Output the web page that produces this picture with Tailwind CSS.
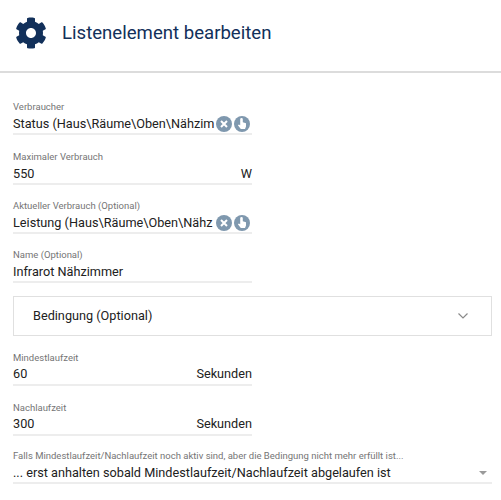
<!DOCTYPE html>
<html><head><meta charset="utf-8"><script src="https://cdn.jsdelivr.net/npm/@tailwindcss/browser@4"></script></head>
<body class="bg-white overflow-hidden">
<div class="w-[501px] h-[500px] font-['Roboto',sans-serif] text-[#212121]">
  <header class="h-[73px] border-b-2 border-[#dcdcdc] flex items-start pl-[15px] pt-[17px]">
    <svg class="w-[32px] h-[32px]" viewBox="0 0 512 512"><path fill="#12305a" d="M487.4 315.7l-42.6-24.6c4.3-23.2 4.3-47 0-70.2l42.6-24.6c4.9-2.8 7.1-8.6 5.5-14-11.1-35.6-30-67.8-54.7-94.6-3.8-4.1-10-5.1-14.8-2.3L380.8 110c-17.9-15.4-38.5-27.3-60.8-35.1V25.8c0-5.6-3.9-10.5-9.4-11.7-36.7-8.2-74.3-7.8-109.2 0-5.5 1.2-9.4 6.1-9.4 11.7V75c-22.2 7.9-42.8 19.8-60.8 35.1L88.7 85.5c-4.9-2.8-11-1.9-14.8 2.3-24.7 26.7-43.6 58.9-54.7 94.6-1.7 5.4.6 11.2 5.5 14L67.3 221c-4.3 23.2-4.3 47 0 70.2l-42.6 24.6c-4.9 2.8-7.1 8.6-5.5 14 11.1 35.6 30 67.8 54.7 94.6 3.8 4.1 10 5.1 14.8 2.3l42.6-24.6c17.9 15.4 38.5 27.3 60.8 35.1v49.2c0 5.6 3.9 10.5 9.4 11.7 36.7 8.2 74.3 7.8 109.2 0 5.5-1.2 9.4-6.1 9.4-11.7v-49.2c22.2-7.9 42.8-19.8 60.8-35.1l42.6 24.6c4.9 2.8 11 1.9 14.8-2.3 24.7-26.7 43.6-58.9 54.7-94.6 1.5-5.5-.7-11.3-5.6-14.1zM256 336c-44.1 0-80-35.9-80-80s35.9-80 80-80 80 35.9 80 80-35.9 80-80 80z"/></svg>
    <h1 class="ml-[15px] mt-[3px] text-[18.6px] leading-[26px] text-[#12305a]">Listenelement bearbeiten</h1>
  </header>
  <main class="px-[13px]">
    <div class="w-[239px] mt-[28px] h-[34px] border-b-2 border-[#ededed]">
      <div class="text-[9.5px] leading-[12px] text-[#757575]">Verbraucher</div>
      <div class="flex items-center h-[17px] mt-[2px]">
        <span class="w-[203px] whitespace-nowrap text-[12.7px] leading-[17px]">Status (Haus\Räume\Oben\Nähzim</span>
        <svg class="w-[16px] h-[16px]" viewBox="0 0 16 16"><circle cx="8" cy="8" r="8" fill="#7f98ae"/><path d="M5 5l6 6M11 5l-6 6" stroke="#fff" stroke-width="2"/></svg>
        <svg class="ml-[2px] w-[16px] h-[16px]" viewBox="0 0 16 16"><circle cx="8" cy="8" r="8" fill="#7f98ae"/><path d="M6.2 3.2a1.3 1.3 0 0 1 2.6 0v3l3.2 1.1v3.2L11 13H6.8L3.9 9.2l1-.8 1.3.9z" fill="#fff"/></svg>
      </div>
    </div>
    <div class="w-[239px] mt-[16px] h-[34px] border-b-2 border-[#ededed]">
      <div class="text-[9.5px] leading-[12px] text-[#757575]">Maximaler Verbrauch</div>
      <div class="flex justify-between text-[12.7px] leading-[17px] mt-[2px]"><span>550</span><span>W</span></div>
    </div>
    <div class="w-[239px] mt-[15px] h-[34px] border-b-2 border-[#ededed]">
      <div class="text-[9.5px] leading-[12px] text-[#757575]">Aktueller Verbrauch (Optional)</div>
      <div class="flex items-center h-[17px] mt-[2px]">
        <span class="w-[203px] whitespace-nowrap text-[12.7px] leading-[17px]">Leistung (Haus\Räume\Oben\Nähz</span>
        <svg class="w-[16px] h-[16px]" viewBox="0 0 16 16"><circle cx="8" cy="8" r="8" fill="#7f98ae"/><path d="M5 5l6 6M11 5l-6 6" stroke="#fff" stroke-width="2"/></svg>
        <svg class="ml-[2px] w-[16px] h-[16px]" viewBox="0 0 16 16"><circle cx="8" cy="8" r="8" fill="#7f98ae"/><path d="M6.2 3.2a1.3 1.3 0 0 1 2.6 0v3l3.2 1.1v3.2L11 13H6.8L3.9 9.2l1-.8 1.3.9z" fill="#fff"/></svg>
      </div>
    </div>
    <div class="w-[239px] mt-[15px] h-[34px] border-b-2 border-[#ededed]">
      <div class="text-[9.5px] leading-[12px] text-[#757575]">Name (Optional)</div>
      <div class="text-[12.7px] leading-[17px] mt-[2px]">Infrarot Nähzimmer</div>
    </div>
    <div class="w-[479px] mt-[13px] h-[40px] border border-[#e0e0e0] flex items-center justify-between pl-[19px] pr-[22px]">
      <span class="text-[12.7px]">Bedingung (Optional)</span>
      <svg class="w-[12px] h-[8px]" viewBox="0 0 12 8"><path d="M1.5 1.5L6 6l4.5-4.5" fill="none" stroke="#8a8a8a" stroke-width="1.2"/></svg>
    </div>
    <div class="w-[239px] mt-[16px] h-[34px] border-b-2 border-[#ededed]">
      <div class="text-[9.5px] leading-[12px] text-[#757575]">Mindestlaufzeit</div>
      <div class="flex justify-between text-[12.7px] leading-[17px] mt-[1px]"><span>60</span><span>Sekunden</span></div>
    </div>
    <div class="w-[239px] mt-[16px] h-[34px] border-b-2 border-[#ededed]">
      <div class="text-[9.5px] leading-[12px] text-[#757575]">Nachlaufzeit</div>
      <div class="flex justify-between text-[12.7px] leading-[17px] mt-[1px]"><span>300</span><span>Sekunden</span></div>
    </div>
    <div class="w-[479px] mt-[14px] h-[34px] border-b-2 border-[#ededed]">
      <div class="text-[9.5px] leading-[12px] text-[#757575] whitespace-nowrap">Falls Mindestlaufzeit/Nachlaufzeit noch aktiv sind, aber die Bedingung nicht mehr erfüllt ist...</div>
      <div class="flex justify-between items-center text-[12.7px] leading-[17px] mt-[2px]"><span>... erst anhalten sobald Mindestlaufzeit/Nachlaufzeit abgelaufen ist</span>
      <span class="mr-[5px] w-0 h-0 border-x-[4px] border-x-transparent border-t-[4px] border-t-[#9a9a9a]"></span></div>
    </div>
  </main>
</div>
</body></html>
